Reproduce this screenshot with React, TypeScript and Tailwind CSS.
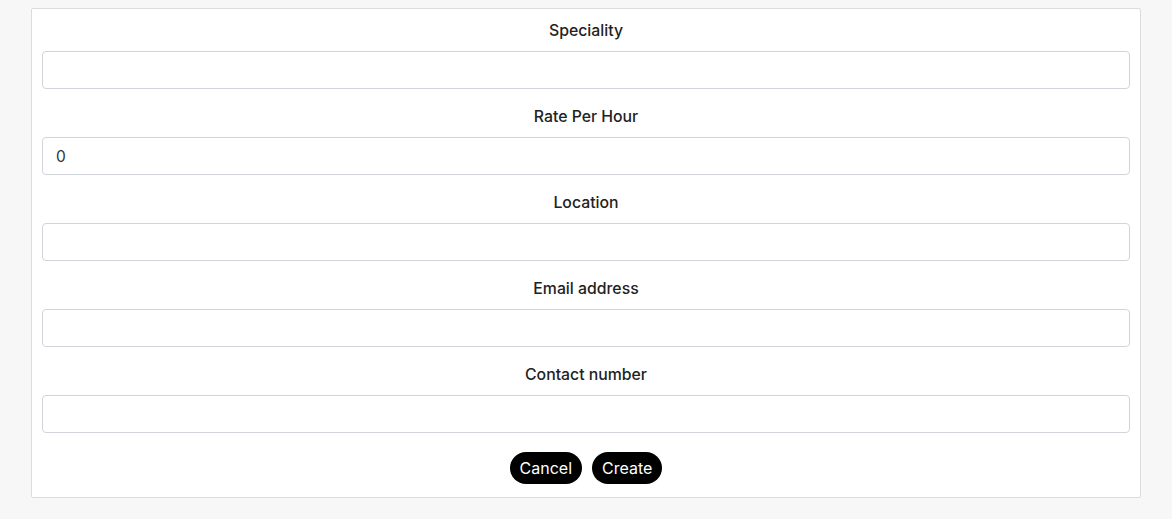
import { useState } from "react";

const FIELDS = [
  { key: "speciality", label: "Speciality", type: "text", initial: "" },
  { key: "rate", label: "Rate Per Hour", type: "number", initial: "0" },
  { key: "location", label: "Location", type: "text", initial: "" },
  { key: "email", label: "Email address", type: "email", initial: "" },
  { key: "contact", label: "Contact number", type: "text", initial: "" },
];

export default function App() {
  const [values, setValues] = useState<Record<string, string>>(
    Object.fromEntries(FIELDS.map((f) => [f.key, f.initial]))
  );

  return (
    <div className="min-h-screen bg-[#f7f7f7] pt-2 px-[31px] font-['Inter','Liberation_Sans',sans-serif]">
      <div className="w-[1110px] bg-white border border-[#dcdcdc] rounded-[2px] px-[10px] pt-[11px] pb-[13px]">
        {FIELDS.map((f) => (
          <div key={f.key} className="flex flex-col mb-[17px]">
            <label className="text-center text-[15.8px] leading-[22px] font-medium text-[#222] mb-[9px]">{f.label}</label>
            <input
              type="text"
              value={values[f.key]}
              onChange={(e) => setValues({ ...values, [f.key]: e.target.value })}
              className="h-[38px] w-full border border-[#d1d5db] rounded-[4px] px-[13px] text-[15.5px] text-[#333] outline-none"
            />
          </div>
        ))}
        <div className="flex justify-center gap-[10px] pt-[2px]">
          <button className="h-8 px-[10px] rounded-full bg-black text-white text-[16px]">Cancel</button>
          <button className="h-8 px-[10px] rounded-full bg-black text-white text-[16px]">Create</button>
        </div>
      </div>
    </div>
  );
}
